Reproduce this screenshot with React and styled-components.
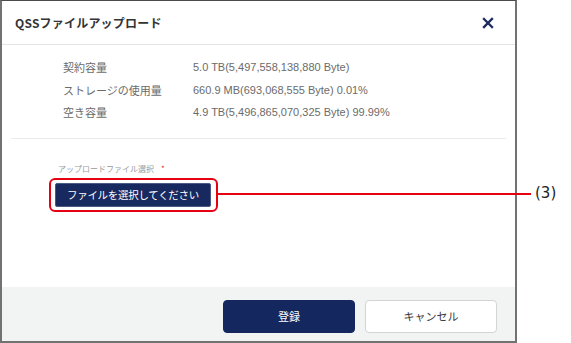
import styled, { createGlobalStyle } from "styled-components";

const GlobalStyle = createGlobalStyle`
  html, body {
    margin: 0;
    padding: 0;
    background: #ffffff;
  }
  body {
    font-family: "Noto Sans CJK JP", "Noto Sans", sans-serif;
  }
`;

const infoRows = [
  ["契約容量", "5.0 TB(5,497,558,138,880 Byte)"],
  ["ストレージの使用量", "660.9 MB(693,068,555 Byte) 0.01%"],
  ["空き容量", "4.9 TB(5,496,865,070,325 Byte) 99.99%"],
];

const CloseIcon = () => (
  <svg width="12" height="12" viewBox="0 0 12 12">
    <path d="M2 2 L10 10 M10 2 L2 10" stroke="#1c2b5e" strokeWidth="2.3" strokeLinecap="square" />
  </svg>
);

const App = () => (
  <Screen>
    <GlobalStyle />
    <Dialog>
      <Header>
        <Title>QSSファイルアップロード</Title>
        <CloseIcon />
      </Header>
      <Body>
        <InfoGrid>
          {infoRows.map(([label, value]) => (
            <InfoRow key={label}>
              <InfoLabel>{label}</InfoLabel>
              <InfoValue>{value}</InfoValue>
            </InfoRow>
          ))}
        </InfoGrid>
        <UploadSection>
          <FieldLabel>
            アップロードファイル選択<Required>*</Required>
          </FieldLabel>
          <Highlight>
            <FileButton>ファイルを選択してください</FileButton>
          </Highlight>
        </UploadSection>
      </Body>
      <Footer>
        <Button $primary>登録</Button>
        <Button>キャンセル</Button>
      </Footer>
    </Dialog>
    <Leader />
    <Callout>(3)</Callout>
  </Screen>
);

export default App;

const Screen = styled.div`
  position: relative;
  width: 571px;
  height: 343px;
  display: flex;
  overflow: hidden;
`;

const Dialog = styled.div`
  width: 517px;
  height: 343px;
  box-sizing: border-box;
  border: 2px solid #727272;
  border-top: 1px solid #4a4a4a;
  background: #ffffff;
  display: flex;
  flex-direction: column;
`;

const Header = styled.div`
  height: 43px;
  flex-shrink: 0;
  display: flex;
  align-items: center;
  justify-content: space-between;
  padding: 0 21px 0 13px;
  border-bottom: 1px solid #e4e4e4;
`;

const Title = styled.div`
  font-size: 12px;
  font-weight: 700;
  color: #333333;
  letter-spacing: 0.2px;
`;

const Body = styled.div`
  flex: 1;
  padding: 0 9px;
`;

const InfoGrid = styled.div`
  padding: 11px 0 14px 52px;
  border-bottom: 1px solid #ececec;
`;

const InfoRow = styled.div`
  display: grid;
  grid-template-columns: 130px 1fr;
  height: 22.5px;
  align-items: center;
  font-size: 11px;
  color: #6b6b6b;
`;

const InfoLabel = styled.span``;

const InfoValue = styled.span`
  font-family: "Liberation Sans", Arial, sans-serif;
  font-size: 11px;
`;

const UploadSection = styled.div`
  padding: 25px 0 0 38px;
  display: flex;
  flex-direction: column;
  align-items: flex-start;
`;

const FieldLabel = styled.div`
  font-size: 8px;
  line-height: 10px;
  height: 10px;
  color: #9a9a9a;
  white-space: nowrap;
  padding-left: 9px;
  margin-bottom: 4px;
`;

const Required = styled.span`
  color: #e0302c;
  margin-left: 7px;
`;

const Highlight = styled.div`
  display: inline-flex;
  padding: 3px 5px 3px 4px;
  border: 2px solid #e50012;
  border-radius: 6px;
`;

const FileButton = styled.div`
  width: 156px;
  height: 24px;
  box-sizing: border-box;
  background: #17295f;
  border: 1px solid #4a5a85;
  border-radius: 2px;
  color: #ffffff;
  font-size: 10.5px;
  letter-spacing: -0.3px;
  display: flex;
  align-items: center;
  justify-content: center;
`;

const Footer = styled.div`
  height: 54px;
  flex-shrink: 0;
  background: #f2f3f3;
  display: flex;
  align-items: center;
  justify-content: flex-end;
  gap: 10px;
  padding-right: 18px;
  padding-top: 4px;
  box-sizing: border-box;
`;

const Button = styled.div`
  width: 132px;
  height: 33px;
  box-sizing: border-box;
  border-radius: 4px;
  display: flex;
  align-items: center;
  justify-content: center;
  font-size: 11px;
  background: ${(p) => (p.$primary ? "#14275f" : "#ffffff")};
  color: ${(p) => (p.$primary ? "#ffffff" : "#3a3a3a")};
  border: 1px solid ${(p) => (p.$primary ? "#14275f" : "#d2d4d6")};
`;

const Leader = styled.div`
  position: absolute;
  left: 218px;
  top: 193px;
  width: 313px;
  height: 2px;
  background: #e50012;
`;

const Callout = styled.div`
  position: absolute;
  left: 535px;
  top: 183px;
  font-family: "DejaVu Sans", Verdana, sans-serif;
  font-size: 15px;
  line-height: 20px;
  color: #222222;
`;
